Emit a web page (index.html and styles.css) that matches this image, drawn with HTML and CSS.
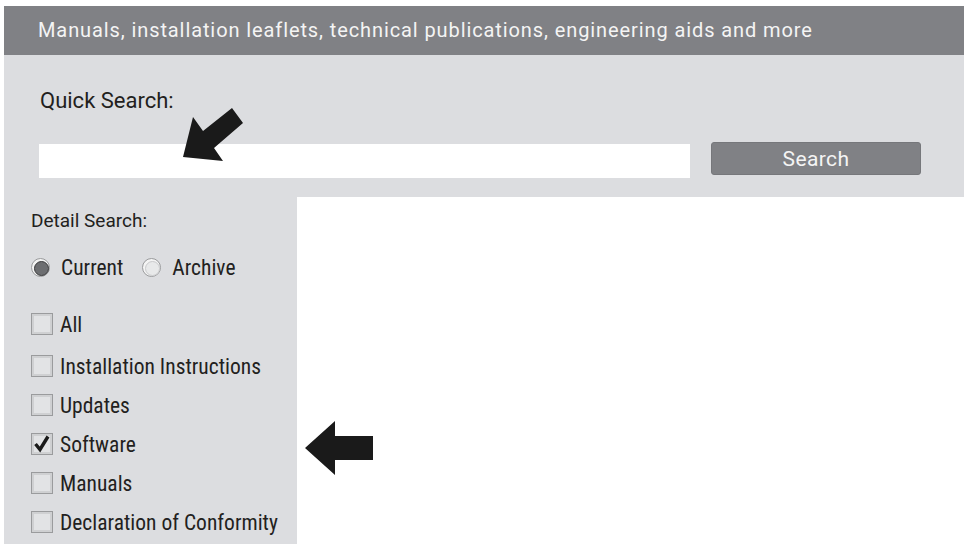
FILE: index.html
```html
<!DOCTYPE html>
<html>
<head>
<meta charset="utf-8">
<link rel="stylesheet" href="styles.css">
</head>
<body>
<div class="page">
  <div class="header">Manuals, installation leaflets, technical publications, engineering aids and more</div>
  <div class="quick">
    <div class="quick-label">Quick Search:</div>
    <div class="quick-row">
      <input class="quick-input" type="text">
      <button class="search-btn">Search</button>
    </div>
  </div>
  <div class="lower">
    <div class="side">
      <div class="detail-label">Detail Search:</div>
      <div class="radios">
        <span class="radio on"></span><span class="radio-text first">Current</span>
        <span class="radio"></span><span class="radio-text">Archive</span>
      </div>
      <div class="checks">
        <div class="check-row"><span class="box"></span><span>All</span></div>
        <div class="check-row"><span class="box"></span><span>Installation Instructions</span></div>
        <div class="check-row"><span class="box"></span><span>Updates</span></div>
        <div class="check-row"><span class="box"><svg viewBox="0 0 20 20" width="20" height="20"><path d="M3.5 10 L8 15.5 L16 2.5" fill="none" stroke="#1a1a1a" stroke-width="3.4" stroke-linejoin="miter"/></svg></span><span>Software</span></div>
        <div class="check-row"><span class="box"></span><span>Manuals</span></div>
        <div class="check-row"><span class="box"></span><span>Declaration of Conformity</span></div>
      </div>
    </div>
    <div class="content"></div>
  </div>
  <svg class="arrows" width="964" height="544" viewBox="0 0 964 544">
    <polygon points="183,157 193,117 203,131 232,108 243,123 214,148 223,161" fill="#1a1a1a"/>
    <polygon points="305,448 335,421 335,436 373,436 373,460 335,460 335,475" fill="#1a1a1a"/>
  </svg>
</div>
</body>
</html>
```

FILE: styles.css
```css
* { box-sizing: border-box; }
html, body { margin: 0; padding: 0; background: #fff; }
body {
  font-family: Roboto, "Liberation Sans", sans-serif;
  color: #231f20;
}
.page {
  position: relative;
  width: 964px;
  height: 544px;
  overflow: hidden;
  padding: 6px 0 0 4px;
}
.header {
  height: 49px;
  background: #808185;
  color: #f4f4f4;
  font-size: 20px;
  letter-spacing: 0.9px;
  line-height: 49px;
  padding-left: 34px;
  white-space: nowrap;
}
.quick {
  background: #dcdde0;
  height: 142px;
  padding: 33px 0 0 35px;
}
.quick-label {
  font-size: 22px;
  line-height: 26px;
  margin-left: 1px;
}
.quick-row {
  display: flex;
  align-items: flex-start;
  margin-top: 28px;
}
.quick-input {
  width: 651px;
  height: 34px;
  border: 0;
  background: #fff;
  margin: 2px 0 0 0;
  padding: 0;
}
.search-btn {
  margin-left: 21px;
  width: 210px;
  height: 33px;
  background: #808185;
  border: 1px solid #76777b;
  border-radius: 3px;
  color: #f4f4f4;
  font-family: inherit;
  font-size: 21px;
  letter-spacing: 0.4px;
  padding: 0;
}
.lower {
  display: flex;
  height: 347px;
}
.side {
  width: 293px;
  background: #dcdde0;
  padding: 12px 0 0 27px;
}
.detail-label {
  font-size: 19px;
  line-height: 24px;
}
.radios {
  display: flex;
  align-items: center;
  margin-top: 22px;
  font-size: 21.5px;
  font-stretch: 80%;
}
.radio {
  width: 19px;
  height: 19px;
  border-radius: 50%;
  border: 1px solid #9a9b9d;
  background: #f4f4f4;
  position: relative;
}
.radio::after {
  content: "";
  position: absolute;
  left: 2px; top: 2px;
  width: 13px; height: 13px;
  border-radius: 50%;
  border: 1px solid #c9cacc;
  background: #e8e9ea;
}
.radio.on::after {
  background: #6d6e71;
  border-color: #3a3a3c;
}
.radio-text { margin-left: 11px; }
.radio-text.first { margin-right: 19px; }
.checks {
  margin-top: 33px;
  display: flex;
  flex-direction: column;
  gap: 17px;
}
.check-row {
  display: flex;
  align-items: center;
  height: 22px;
  font-size: 21.5px;
  font-stretch: 80%;
}
.check-row:first-child { margin-bottom: 3px; }
.box {
  width: 22px;
  height: 22px;
  border: 1px solid #9a9b9d;
  box-shadow: inset 0 0 0 2px #cfd0d2;
  background: #e2e3e5;
  margin-right: 7px;
  display: flex;
  align-items: center;
  justify-content: center;
}
.content { flex: 1; background: #fff; }
.arrows { position: absolute; left: 0; top: 0; pointer-events: none; }
```
